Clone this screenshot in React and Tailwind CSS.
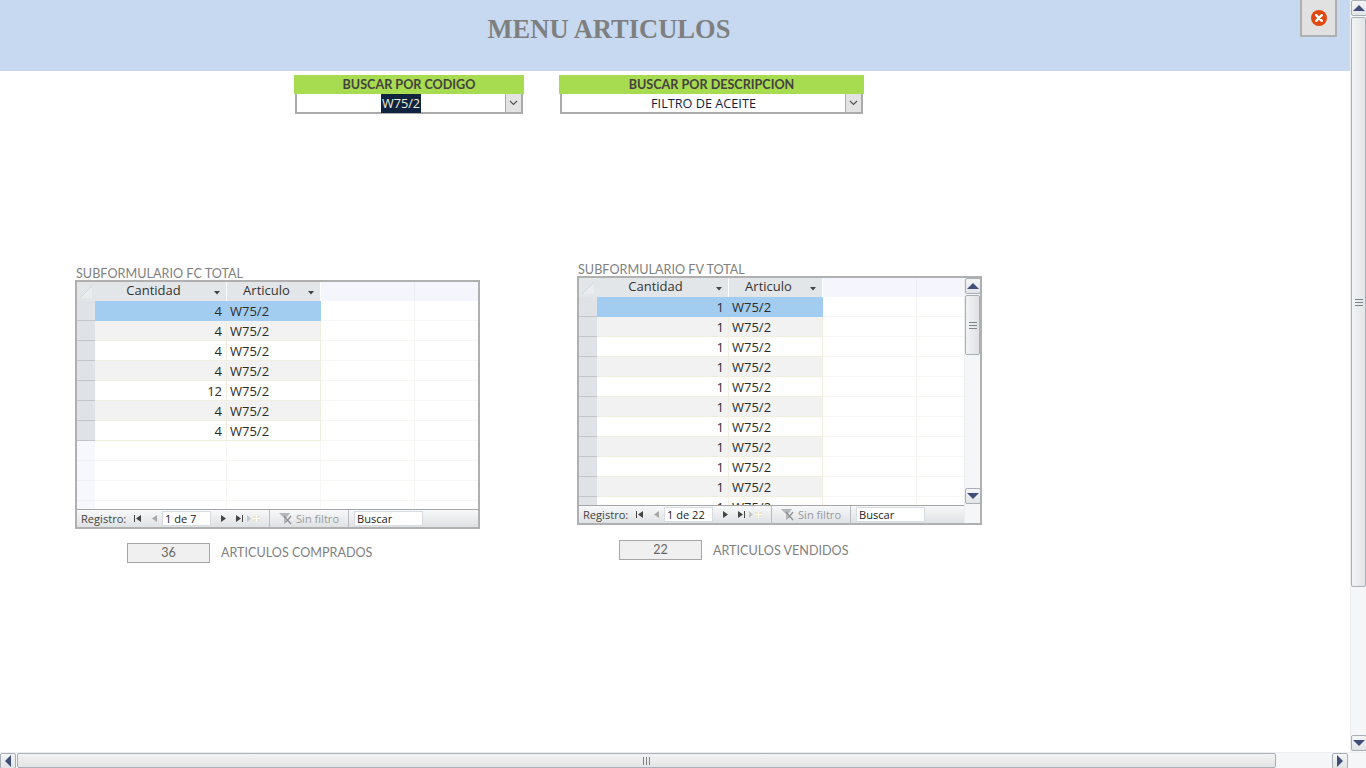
import React from "react";

const ui = { fontFamily: "'Open Sans','Noto Sans',sans-serif" };
const cal = { fontFamily: "Lato,'Liberation Sans',sans-serif" };

function Tri({ dir }) {
  const pts = { up: "1,7 7,1 13,7", down: "1,1 7,7 13,1", left: "7,1 1,7 7,13", right: "1,1 7,7 1,13" }[dir];
  const vertical = dir === "up" || dir === "down";
  return (
    <svg width={vertical ? 14 : 8} height={vertical ? 8 : 14} viewBox={vertical ? "0 0 14 8" : "0 0 8 14"}>
      <polygon points={pts} fill="#3f4f7a" />
    </svg>
  );
}

function ScrollBtn({ dir }) {
  return (
    <div className="w-[16px] h-[16px] shrink-0 flex items-center justify-center bg-gradient-to-b from-[#f4f5f6] to-[#e2e4e6] border border-[#a9afb6] rounded-[2px]">
      <Tri dir={dir} />
    </div>
  );
}

function Grip({ vertical }) {
  return (
    <svg width={vertical ? 8 : 7} height={vertical ? 7 : 8} viewBox={vertical ? "0 0 8 7" : "0 0 7 8"}>
      {vertical ? (
        <path d="M0 .5H8M0 3.5H8M0 6.5H8" stroke="#7d8288" />
      ) : (
        <path d="M.5 0V8M3.5 0V8M6.5 0V8" stroke="#7d8288" />
      )}
    </svg>
  );
}

function Combo({ green, width, value, selected }) {
  return (
    <div className="flex flex-col" style={{ width }}>
      <div className="h-[19px] bg-[#a8dc50] text-center text-[12.6px] leading-[20px] font-bold text-[#44413f]" style={cal}>
        {green}
      </div>
      <div className="mx-[1px] h-[20px] border-2 border-t-0 border-[#ababab] bg-white flex">
        <div className="flex-1 text-center text-[12.7px] leading-[19px] text-[#10243f]" style={ui}>
          {selected ? <span className="bg-[#10243f] text-[#f3f0d8] inline-block px-[1px]">{value}</span> : value}
        </div>
        <div className="w-[16px] border-l border-[#ababab] bg-[#e3e3e3] flex items-center justify-center">
          <svg width="9" height="6" viewBox="0 0 9 6">
            <path d="M1 1l3.5 3.5L8 1" fill="none" stroke="#555" strokeWidth="1.2" />
          </svg>
        </div>
      </div>
    </div>
  );
}

function HeadDrop() {
  return (
    <svg width="7" height="4" viewBox="0 0 7 4" className="absolute right-[5px] top-[9px]">
      <polygon points="0,0 6,0 3,3.5" fill="#444" />
    </svg>
  );
}

function NavIcon({ d, color = "#444" }) {
  return (
    <svg width="9" height="9" viewBox="0 0 9 9" className="shrink-0">
      <path d={d} fill={color} />
    </svg>
  );
}

function Row({ value, index, empty }) {
  if (empty) {
    return (
      <div className="flex h-[20px] shrink-0">
        <div className="w-[18px] border-b border-[#eef0f6] bg-[#f6f8fe]" />
        <div className="w-[132px] border-b border-r border-[#f6f6f2]" />
        <div className="w-[94px] border-b border-r border-[#f6f6f2]" />
        <div className="w-[94px] border-b border-r border-[#f6f6f2]" />
        <div className="flex-1 border-b border-[#f6f6f2]" />
      </div>
    );
  }
  const selected = index === 0;
  const bg = selected ? "bg-[#a3cdf0]" : index % 2 === 1 ? "bg-[#f2f2f2]" : "bg-white";
  const border = selected ? "border-[#a3cdf0]" : "border-[#f0eedd]";
  return (
    <div className="flex h-[20px] shrink-0 text-[13px] leading-[20px] text-[#2b2b2b]" style={ui}>
      <div className="w-[18px] bg-[#dfe3e8] border-b border-[#c2c6cb]" />
      <div className={`w-[132px] text-right pr-[4px] border-b border-r ${bg} ${border}`}>{value}</div>
      <div className={`w-[94px] pl-[3px] border-b border-r ${bg} ${border}`}>W75/2</div>
      <div className="w-[94px] border-b border-r border-[#f6f6f2]" />
      <div className="flex-1 border-b border-[#f6f6f2]" />
    </div>
  );
}

function DataGrid({ rows, empties, nav, scroll }) {
  return (
    <div className="w-[405px] h-[249px] border-2 border-[#b0b0b0] bg-white flex">
      <div className="flex-1 min-w-0 flex flex-col">
        <div className="flex-1 min-h-0 overflow-hidden flex flex-col">
          <div className="flex h-[19px] shrink-0 bg-[#f5f6fd] text-[13px] leading-[17px] text-[#333]" style={ui}>
            <div className="w-[18px] bg-[#e3e6e9] flex items-center justify-center">
              <svg width="14" height="14" viewBox="0 0 14 14">
                <polygon points="1,13 13,1 13,13" fill="#eaecef" />
                <path d="M1 13L13 1" stroke="#cfd4da" />
              </svg>
            </div>
            <div className="relative w-[132px] bg-[#e3e6e9] border-r border-white text-center pr-[14px]">
              Cantidad
              <HeadDrop />
            </div>
            <div className="relative w-[94px] bg-[#e3e6e9] border-r border-white text-center pr-[14px]">
              Articulo
              <HeadDrop />
            </div>
            <div className="w-[94px] border-r border-[#eceef5]" />
            <div className="flex-1" />
          </div>
          {rows.map((v, i) => (
            <Row key={i} value={v} index={i} />
          ))}
          {Array.from({ length: empties }).map((_, i) => (
            <Row key={i} empty />
          ))}
        </div>
        <div className="h-[18px] shrink-0 flex items-stretch bg-gradient-to-b from-[#f7f8f9] to-[#dfe2e5] border-t border-[#a6a6a6] text-[11.1px] leading-[17px]" style={ui}>
          <div className="w-[193px] flex items-center border-r border-[#b8bcc1]">
            <span className="ml-[4px] w-[52px] text-[#444]">Registro:</span>
            <NavIcon d="M1 1h1v7H1zM8 1v7L3 4.5z" />
            <span className="ml-[8px]">
              <NavIcon d="M7 1v7L2 4.5z" color="#a8a8a8" />
            </span>
            <span className="ml-[3px] w-[49px] h-[15px] bg-white border border-[#d8dbdf] pl-[2px] leading-[14px] text-[#222]">{nav}</span>
            <span className="ml-[8px]">
              <NavIcon d="M2 1v7l5-3.5z" />
            </span>
            <span className="ml-[7px]">
              <NavIcon d="M1 1v7l5-3.5zM7 1h1v7H7z" />
            </span>
            <span className="ml-[3px] flex">
              <svg width="15" height="9" viewBox="0 0 15 9">
                <path d="M0 1v7l4-3.5z" fill="#c4c7ca" />
                <path d="M6 2h7v5H6z" fill="#f0e8b8" />
                <path d="M9.5 1v7M6 4.5h7" stroke="#fff" />
              </svg>
            </span>
          </div>
          <div className="w-[79px] flex items-center border-r border-[#b8bcc1] text-[#9a9a9a]">
            <svg width="15" height="13" viewBox="0 0 15 13" className="ml-[8px] mr-[3px]">
              <path d="M1 1h11L8 6v5L6 12V6z" fill="#b4b7ba" />
              <path d="M6 4l7 8M13 4l-5 6" stroke="#8d9094" strokeWidth="1.3" />
            </svg>
            Sin filtro
          </div>
          <div className="flex items-center">
            <span className="ml-[5px] w-[69px] h-[15px] bg-white border border-[#d8dbdf] pl-[2px] leading-[14px] text-[#222]">Buscar</span>
          </div>
        </div>
      </div>
      {scroll && (
        <div className="w-[16px] shrink-0 border-l border-[#eceef0] bg-[#f5f6f7] flex flex-col">
          <ScrollBtn dir="up" />
          <div className="h-[60px] w-[15px] mt-[1px] rounded-[2px] border border-[#a9afb6] bg-gradient-to-r from-[#f2f3f4] to-[#dfe1e4] flex items-center justify-center">
            <Grip vertical />
          </div>
          <div className="flex-1" />
          <div className="mb-[19px]">
            <ScrollBtn dir="down" />
          </div>
        </div>
      )}
    </div>
  );
}

function SubForm({ title, rows, empties, nav, scroll, total, label, className, totalsClass, labelClass }) {
  return (
    <div className={`flex flex-col ${className}`}>
      <div className="h-[14px] pl-[1px] text-[12.65px] leading-[16px] text-[#7f7f7f] whitespace-nowrap" style={cal}>
        {title}
      </div>
      <DataGrid rows={rows} empties={empties} nav={nav} scroll={scroll} />
      <div className={`flex items-start ${totalsClass}`}>
        <div className="w-[83px] h-[20px] bg-[#f0f0f0] border border-[#a6a6a6] text-center text-[12.5px] leading-[18px] text-[#666]" style={cal}>
          {total}
        </div>
        <div className={`ml-[11px] text-[12.6px] leading-[20px] text-[#7f7f7f] whitespace-nowrap ${labelClass}`} style={cal}>
          {label}
        </div>
      </div>
    </div>
  );
}

export default function App() {
  return (
    <div className="w-[1366px] h-[768px] overflow-hidden bg-white flex flex-col">
      <div className="flex-1 min-h-0 flex">
        <main className="flex-1 min-w-0 flex flex-col">
          <header className="h-[71px] shrink-0 bg-[#c6d9f1] flex items-start">
            <div className="w-[1300px] text-center pr-[82px] pt-[10px] text-[26.5px] leading-[38px] font-bold text-[#7f7f7f]" style={{ fontFamily: "'Liberation Serif',serif" }}>
              MENU ARTICULOS
            </div>
            <button className="w-[37px] h-[37px] bg-[#e1e1e1] border-2 border-[#b0b0b0] border-t-0 flex items-center justify-center">
              <svg width="16" height="16" viewBox="0 0 16 16">
                <circle cx="8" cy="8" r="8" fill="#e2470e" />
                <path d="M5.2 5.2l5.6 5.6M10.8 5.2l-5.6 5.6" stroke="#fff" strokeWidth="2.4" strokeLinecap="round" />
              </svg>
            </button>
          </header>
          <div className="flex mt-[4px] ml-[294px] gap-[35px]">
            <Combo green="BUSCAR POR CODIGO" width="230px" value="W75/2" selected />
            <Combo green="BUSCAR POR DESCRIPCION" width="305px" value="FILTRO DE ACEITE" />
          </div>
          <div className="flex items-start ml-[75px] mt-[148px] gap-[97px]">
            <SubForm
              className="mt-[4px]"
              totalsClass="mt-[14px] ml-[52px]"
              labelClass=""
              title="SUBFORMULARIO FC TOTAL"
              rows={[4, 4, 4, 4, 12, 4, 4]}
              empties={4}
              nav="1 de 7"
              total="36"
              label="ARTICULOS COMPRADOS"
            />
            <SubForm
              totalsClass="mt-[15px] ml-[42px]"
              labelClass="mt-[1px]"
              title="SUBFORMULARIO FV TOTAL"
              rows={[1, 1, 1, 1, 1, 1, 1, 1, 1, 1, 1]}
              empties={0}
              nav="1 de 22"
              scroll
              total="22"
              label="ARTICULOS VENDIDOS"
            />
          </div>
        </main>
        <aside className="w-[16px] shrink-0 bg-[#f5f6f7] border-l border-[#eceef0] flex flex-col">
          <ScrollBtn dir="up" />
          <div className="h-[570px] w-[15px] mt-[1px] rounded-[2px] border border-[#a9afb6] bg-gradient-to-r from-[#f2f3f4] to-[#e2e4e6] flex items-center justify-center">
            <Grip vertical />
          </div>
          <div className="flex-1" />
          <div className="mb-[1px]">
            <ScrollBtn dir="down" />
          </div>
        </aside>
      </div>
      <div className="h-[16px] shrink-0 bg-[#f5f6f7] border-t border-[#eceef0] flex">
        <ScrollBtn dir="left" />
        <div className="w-[1259px] ml-[1px] rounded-[2px] border border-[#a9afb6] bg-gradient-to-b from-[#f2f3f4] to-[#e2e4e6] flex items-center justify-center">
          <Grip />
        </div>
        <div className="w-[56px]" />
        <ScrollBtn dir="right" />
        <div className="flex-1" />
      </div>
    </div>
  );
}
